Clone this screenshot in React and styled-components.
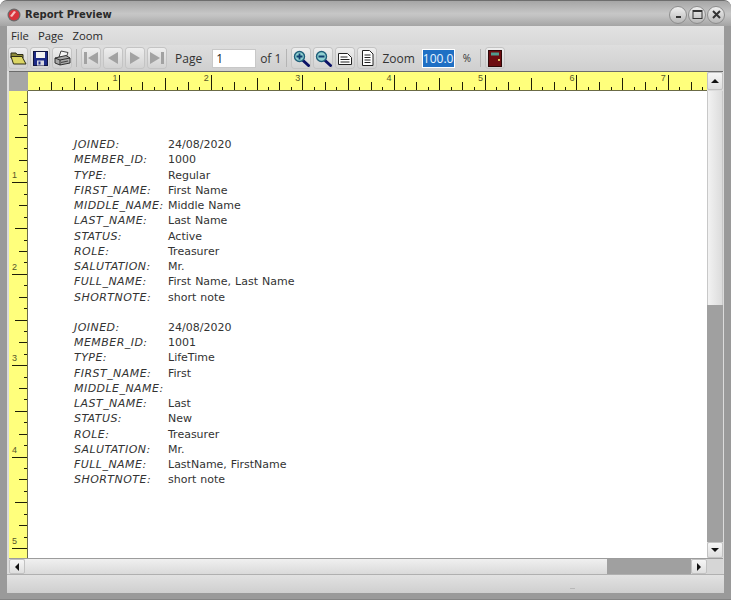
import React from 'react';
import styled, { createGlobalStyle } from 'styled-components';

const INCH = 91.4;

const records = [
  [
    ['JOINED:', '24/08/2020'],
    ['MEMBER_ID:', '1000'],
    ['TYPE:', 'Regular'],
    ['FIRST_NAME:', 'First Name'],
    ['MIDDLE_NAME:', 'Middle Name'],
    ['LAST_NAME:', 'Last Name'],
    ['STATUS:', 'Active'],
    ['ROLE:', 'Treasurer'],
    ['SALUTATION:', 'Mr.'],
    ['FULL_NAME:', 'First Name, Last Name'],
    ['SHORTNOTE:', 'short note'],
  ],
  [
    ['JOINED:', '24/08/2020'],
    ['MEMBER_ID:', '1001'],
    ['TYPE:', 'LifeTime'],
    ['FIRST_NAME:', 'First'],
    ['MIDDLE_NAME:', ''],
    ['LAST_NAME:', 'Last'],
    ['STATUS:', 'New'],
    ['ROLE:', 'Treasurer'],
    ['SALUTATION:', 'Mr.'],
    ['FULL_NAME:', 'LastName, FirstName'],
    ['SHORTNOTE:', 'short note'],
  ],
];

const tickSize = i => {
  if (i % 8 === 0) return 15;
  if (i % 4 === 0) return 12;
  if (i % 2 === 0) return 8;
  return 3;
};

const HorizontalRuler = () => {
  const ticks = [];
  for (let i = 1; i < 62; i++) {
    const x = Math.round((i * INCH) / 8) + 0.5;
    ticks.push(<line key={i} x1={x} x2={x} y1={18 - tickSize(i)} y2={18} stroke="#1e1e08" />);
  }
  return (
    <svg width="678" height="18" style={{ display: 'block' }}>
      {ticks}
      {[1, 2, 3, 4, 5, 6, 7].map(n => (
        <text key={n} x={n * INCH - 2} y={9} textAnchor="end" fontSize="9" fontFamily="Liberation Sans" fill="#55552a">
          {n}
        </text>
      ))}
    </svg>
  );
};

const VerticalRuler = () => {
  const ticks = [];
  for (let i = 1; i < 41; i++) {
    const y = Math.round((i * INCH) / 8) + 0.5;
    ticks.push(<line key={i} x1={18 - tickSize(i)} x2={18} y1={y} y2={y} stroke="#1e1e08" />);
  }
  return (
    <svg width="18" height="467" style={{ display: 'block' }}>
      {ticks}
      {[1, 2, 3, 4, 5].map(n => (
        <text key={n} x={3} y={n * INCH - 4} fontSize="9" fontFamily="Liberation Sans" fill="#55552a">
          {n}
        </text>
      ))}
    </svg>
  );
};

const Folder = () => (
  <svg width="17" height="14" viewBox="0 0 17 14">
    <path d="M1 2h5l1 1.500h6V7H1z" fill="#8d8a3a" stroke="#2d2d18" />
    <path d="M1 5.500h11l4 7.500H3.500z" fill="#dcd664" stroke="#2d2d18" />
  </svg>
);

const Disk = () => (
  <svg width="15" height="15" viewBox="0 0 15 15">
    <rect x="0.5" y="0.5" width="14" height="14" fill="#1c2a86" stroke="#10143f" />
    <rect x="3" y="1" width="9" height="6" fill="#f2f2f2" />
    <rect x="4" y="9.500" width="7" height="5" fill="#d6d6e0" />
    <rect x="5.500" y="10.500" width="2" height="3" fill="#1c2a86" />
  </svg>
);

const Printer = () => (
  <svg width="17" height="16" viewBox="0 0 17 16">
    <path d="M7 1l7 1.500-2 5.500-7-1z" fill="#f4f4f4" stroke="#333" strokeWidth="0.9" />
    <path d="M1 8l11-2.500 4 2.500v5l-10 2-5-2z" fill="#a8a8a8" stroke="#222" strokeWidth="0.9" />
    <path d="M1 8l5 2 10-2M6 10v5" fill="none" stroke="#222" strokeWidth="0.9" />
    <path d="M7 12.500l7-1.500" stroke="#444" strokeWidth="1.200" />
  </svg>
);

const NavIcon = ({ dir, bar }) => (
  <svg width="16" height="14" viewBox="0 0 16 14">
    <g fill="#a2a2a2" transform={dir === 'right' ? 'translate(16 0) scale(-1 1)' : undefined}>
      {bar && <rect x="1" y="1" width="3" height="12" />}
      <path d={bar ? 'M15 1v12L5 7z' : 'M13 1v12L3 7z'} />
    </g>
  </svg>
);

const Magnifier = ({ plus }) => (
  <svg width="17" height="17" viewBox="0 0 17 17">
    <path d="M9.500 10l6 5.500" stroke="#0b1166" strokeWidth="3" strokeLinecap="round" />
    <circle cx="6.500" cy="6.500" r="5" fill="#8fd0d0" stroke="#1f5f7a" strokeWidth="1.400" />
    <path d={plus ? 'M3.500 6.500h6M6.500 3.500v6' : 'M3.500 6.500h6'} stroke="#0f3f70" strokeWidth="1.800" />
  </svg>
);

const PageWide = () => (
  <svg width="16" height="15" viewBox="0 0 16 15">
    <path d="M1.500 2.500h9l4 4v7h-13z" fill="#fff" stroke="#222" />
    <path d="M3.500 6h7M3.500 8.500h9M3.500 11h9" stroke="#222" />
  </svg>
);

const PageTall = () => (
  <svg width="13" height="16" viewBox="0 0 13 16">
    <path d="M1.500 0.500h7l3.500 3.500v11.500h-10.500z" fill="#fff" stroke="#222" />
    <path d="M3.500 5h6M3.500 7.500h6M3.500 10h6M3.500 12.500h6" stroke="#222" />
  </svg>
);

const Door = () => (
  <svg width="14" height="17" viewBox="0 0 14 17">
    <rect x="0.500" y="0.500" width="13" height="16" fill="#6d0c10" stroke="#2e0808" />
    <rect x="3" y="2.500" width="8" height="3" fill="#4f9c8e" />
    <rect x="10" y="9" width="2" height="2" fill="#d8c060" />
  </svg>
);

const AppBadge = () => (
  <svg width="14" height="14" viewBox="0 0 14 14">
    <circle cx="7" cy="7" r="6.500" fill="#6a6a6a" />
    <circle cx="7" cy="7" r="5.300" fill="#d8333c" />
    <path d="M3 8l4-5 2 1-4 5z" fill="#f6c0c0" />
  </svg>
);

const App = () => (
  <Window>
    <GlobalStyle />
    <TitleBar>
      <AppBadge />
      <Title>Report Preview</Title>
      <Caption>
        <CaptionButton>
          <svg width="9" height="9" viewBox="0 0 9 9">
            <rect x="2" y="6" width="5" height="2" fill="#333" />
          </svg>
        </CaptionButton>
        <CaptionButton>
          <svg width="11" height="9" viewBox="0 0 11 9">
            <rect x="1" y="0.500" width="9" height="8" fill="none" stroke="#333" />
            <rect x="1" y="0.500" width="9" height="1.500" fill="#333" />
          </svg>
        </CaptionButton>
        <CaptionButton>
          <svg width="9" height="9" viewBox="0 0 9 9">
            <path d="M1 1l7 7M8 1l-7 7" stroke="#333" strokeWidth="2" />
          </svg>
        </CaptionButton>
      </Caption>
    </TitleBar>
    <Client>
      <MenuBar>
        <MenuItem>File</MenuItem>
        <MenuItem>Page</MenuItem>
        <MenuItem>Zoom</MenuItem>
      </MenuBar>
      <Toolbar>
        <ToolButton><Folder /></ToolButton>
        <ToolButton><Disk /></ToolButton>
        <ToolButton><Printer /></ToolButton>
        <Separator />
        <ToolButton><NavIcon dir="left" bar /></ToolButton>
        <ToolButton><NavIcon dir="left" /></ToolButton>
        <ToolButton><NavIcon dir="right" /></ToolButton>
        <ToolButton><NavIcon dir="right" bar /></ToolButton>
        <ToolLabel $left={9}>Page</ToolLabel>
        <PageInput>1</PageInput>
        <ToolLabel $left={4}>of 1</ToolLabel>
        <Separator />
        <ToolButton><Magnifier plus /></ToolButton>
        <ToolButton><Magnifier /></ToolButton>
        <ToolButton><PageWide /></ToolButton>
        <ToolButton><PageTall /></ToolButton>
        <ToolLabel $left={6}>Zoom</ToolLabel>
        <ZoomInput><Selected>100.0</Selected></ZoomInput>
        <Percent>%</Percent>
        <Separator />
        <ToolButton><Door /></ToolButton>
      </Toolbar>
      <Viewer>
        <ViewerTop>
          <RulerCorner />
          <TopRuler><HorizontalRuler /></TopRuler>
          <ScrollButton $h={18}><UpArrow /></ScrollButton>
        </ViewerTop>
        <ViewerMiddle>
          <SideRuler><VerticalRuler /></SideRuler>
          <Paper>
            {records.map((record, r) => (
              <Record key={r}>
                {record.map(([label, value]) => (
                  <React.Fragment key={label}>
                    <Label>{label}</Label>
                    <Value>{value}</Value>
                  </React.Fragment>
                ))}
              </Record>
            ))}
          </Paper>
          <VScroll>
            <VThumb />
            <VTrack />
            <ScrollButton $h={16}><DownArrow /></ScrollButton>
          </VScroll>
        </ViewerMiddle>
        <HScroll>
          <HButton><LeftArrow /></HButton>
          <HThumb />
          <HTrack />
          <HButton><RightArrow /></HButton>
          <ScrollCorner />
        </HScroll>
      </Viewer>
      <StatusBar><Grip /></StatusBar>
    </Client>
  </Window>
);

export default App;

const GlobalStyle = createGlobalStyle`
  html, body {
    margin: 0;
    padding: 0;
    background: #fff;
  }
  body {
    font-family: "Open Sans", "Liberation Sans", sans-serif;
    color: #222;
  }
`;

const Window = styled.div`
  width: 731px;
  height: 600px;
  box-sizing: border-box;
  display: flex;
  flex-direction: column;
  overflow: hidden;
  border-radius: 7px 7px 0 0;
  background: #9a9a9a;
  border-top: 1px solid #6e6e6e;
  border-bottom: 1px solid #858585;
`;

const TitleBar = styled.div`
  height: 25px;
  flex: none;
  box-sizing: border-box;
  display: flex;
  align-items: center;
  padding: 2px 6px 0 7px;
  gap: 4px;
  background: linear-gradient(#a6a6a6 0%, #c6c6c6 50%, #c2c2c2 60%, #a4a4a4 100%);
`;

const Title = styled.span`
  font-family: "DejaVu Sans", sans-serif;
  font-size: 10px;
  font-weight: 700;
  color: #2a2a2a;
`;

const Caption = styled.div`
  margin-left: auto;
  display: flex;
  gap: 0;
`;

const CaptionButton = styled.span`
  width: 16px;
  height: 16px;
  margin-left: 1px;
  border-radius: 50%;
  display: flex;
  align-items: center;
  justify-content: center;
  background: linear-gradient(#f0f0f0, #b8b8b8);
  border: 1px solid #8d8d8d;
`;

const Client = styled.div`
  flex: 1;
  margin: 0 7px 6px;
  display: flex;
  flex-direction: column;
  background: #dcdcdc;
`;

const MenuBar = styled.div`
  height: 19px;
  flex: none;
  display: flex;
  align-items: center;
  padding-left: 4px;
  gap: 9px;
  font-size: 11.3px;
  background: linear-gradient(#e2e2e2, #d8d8d8);
`;

const MenuItem = styled.span`
  color: #2a2a2a;
`;

const Toolbar = styled.div`
  height: 26px;
  flex: none;
  box-sizing: border-box;
  display: flex;
  align-items: center;
  padding-left: 2px;
  gap: 4px;
  font-size: 12px;
  background: linear-gradient(#dedede, #cfcfcf);
`;

const ToolButton = styled.span`
  width: 18px;
  height: 20px;
  flex: none;
  display: flex;
  align-items: center;
  justify-content: center;
  border-radius: 3px;
  background: linear-gradient(#eeeeee, #d2d2d2);
  box-shadow: 0 0 0 1px #c4c4c4;
`;

const Separator = styled.span`
  width: 1px;
  height: 18px;
  flex: none;
  margin: 0 1px;
  background: #b4b4b4;
`;

const ToolLabel = styled.span`
  margin-left: ${props => props.$left - 4}px;
  color: #333;
`;

const PageInput = styled.span`
  width: 44px;
  height: 19px;
  margin-left: 6px;
  box-sizing: border-box;
  padding-left: 3px;
  line-height: 18px;
  background: #fff;
  border: 1px solid #c8c8c8;
`;

const ZoomInput = styled.span`
  width: 33px;
  height: 19px;
  margin-left: 3px;
  box-sizing: border-box;
  line-height: 17px;
  background: #fff;
  display: flex;
`;

const Selected = styled.span`
  background: #1f6fc4;
  color: #e8f4ff;
  height: 17px;
  margin: 1px 0 0 1px;
  width: 31px;
`;

const Percent = styled.span`
  margin: 0 4px;
  font-size: 10px;
  color: #333;
`;

const Viewer = styled.div`
  flex: 1;
  display: flex;
  flex-direction: column;
  padding: 0 1px 0 2px;
`;

const ViewerTop = styled.div`
  height: 20px;
  flex: none;
  display: flex;
  border-top: 1px solid #6b6b6b;
  box-sizing: border-box;
`;

const RulerCorner = styled.div`
  width: 19px;
  flex: none;
  background: #a6a6a6;
`;

const TopRuler = styled.div`
  width: 679px;
  flex: none;
  box-sizing: border-box;
  overflow: hidden;
  background: #ffff7c;
  border-bottom: 1px solid #6b6b45;
`;

const ScrollButton = styled.div`
  width: 16px;
  height: ${props => props.$h}px;
  flex: none;
  box-sizing: border-box;
  display: flex;
  align-items: center;
  justify-content: center;
  border-radius: 2px;
  background: linear-gradient(#f6f6f6, #dedede);
  border: 1px solid #c2c2c2;
`;

const ViewerMiddle = styled.div`
  height: 467px;
  flex: none;
  display: flex;
`;

const SideRuler = styled.div`
  width: 19px;
  flex: none;
  box-sizing: border-box;
  background: #ffff7c;
  border-right: 1px solid #6b6b45;
`;

const Paper = styled.div`
  width: 679px;
  flex: none;
  box-sizing: border-box;
  background: #fff;
  padding: 46px 0 0 46px;
  display: flex;
  flex-direction: column;
  gap: 15px;
`;

const Record = styled.div`
  display: grid;
  grid-template-columns: 94px auto;
  justify-content: start;
  grid-auto-rows: 15.25px;
  font-family: "DejaVu Sans", sans-serif;
  font-size: 11px;
  line-height: 15px;
  color: #333;
`;

const Label = styled.span`
  font-style: italic;
  white-space: nowrap;
  letter-spacing: 0.45px;
`;

const Value = styled.span`
  white-space: nowrap;
  word-spacing: 0.5px;
`;

const VScroll = styled.div`
  width: 16px;
  flex: none;
  display: flex;
  flex-direction: column;
`;

const VThumb = styled.div`
  height: 214px;
  flex: none;
  background: linear-gradient(90deg, #f2f2f2, #dcdcdc);
  border-left: 1px solid #c8c8c8;
  border-right: 1px solid #c8c8c8;
  box-sizing: border-box;
`;

const VTrack = styled.div`
  flex: 1;
  background: #a0a0a0;
`;

const HScroll = styled.div`
  height: 15px;
  flex: none;
  display: flex;
  border-top: 1px solid #9c9c9c;
`;

const HButton = styled.div`
  width: 16px;
  flex: none;
  box-sizing: border-box;
  display: flex;
  align-items: center;
  justify-content: center;
  border-radius: 2px;
  background: linear-gradient(#f6f6f6, #dedede);
  border: 1px solid #c2c2c2;
`;

const HThumb = styled.div`
  width: 582px;
  flex: none;
  background: linear-gradient(#f0f0f0, #dadada);
`;

const HTrack = styled.div`
  width: 84px;
  flex: none;
  background: #a0a0a0;
`;

const ScrollCorner = styled.div`
  flex: 1;
  background: #d6d6d6;
`;

const StatusBar = styled.div`
  flex: 1;
  display: flex;
  justify-content: center;
  align-items: center;
  padding-left: 413px;
  border-top: 1px solid #b0b0b0;
  background: linear-gradient(#e2e2e2, #cfcfcf);
`;

const Grip = styled.span`
  width: 5px;
  height: 1px;
  margin-top: 8px;
  background: #b8b8b8;
`;

const UpArrow = styled.span`
  width: 0;
  height: 0;
  border-left: 4px solid transparent;
  border-right: 4px solid transparent;
  border-bottom: 4px solid #111;
`;

const DownArrow = styled.span`
  width: 0;
  height: 0;
  border-left: 4px solid transparent;
  border-right: 4px solid transparent;
  border-top: 4px solid #111;
`;

const LeftArrow = styled.span`
  width: 0;
  height: 0;
  border-top: 4px solid transparent;
  border-bottom: 4px solid transparent;
  border-right: 4px solid #111;
`;

const RightArrow = styled.span`
  width: 0;
  height: 0;
  border-top: 4px solid transparent;
  border-bottom: 4px solid transparent;
  border-left: 4px solid #111;
`;
